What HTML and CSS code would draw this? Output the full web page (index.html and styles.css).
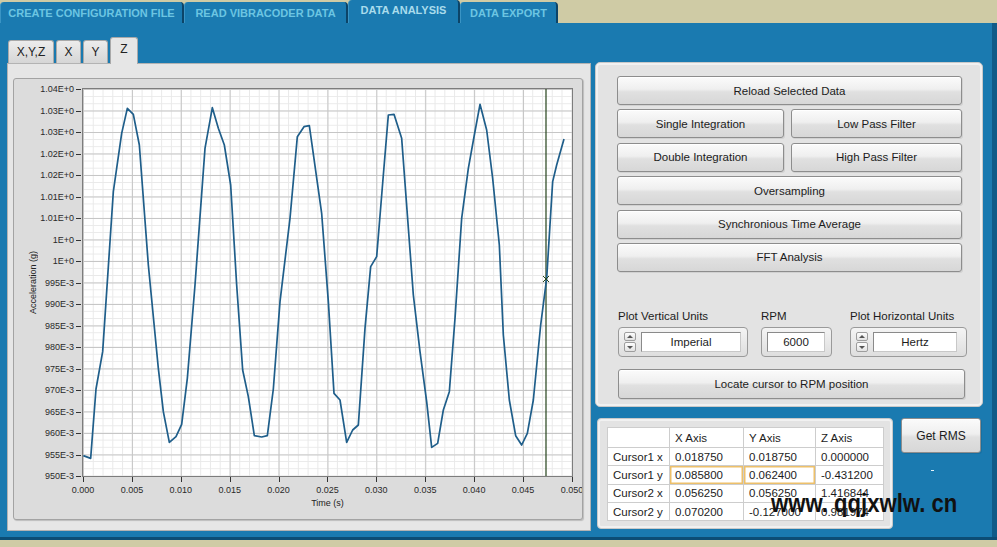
FILE: index.html
```html
<!DOCTYPE html>
<html>
<head>
<meta charset="utf-8">
<title>Data Analysis</title>
<link rel="stylesheet" href="styles.css">
</head>
<body>
<div class="app">
  <div class="topbar">
    <div class="tab t1">CREATE CONFIGURATION FILE</div>
    <div class="tab t2">READ VIBRACODER DATA</div>
    <div class="tab t3 active">DATA ANALYSIS</div>
    <div class="tab t4">DATA EXPORT</div>
  </div>
  <div class="main">
    <div class="leftcol">
      <div class="subtabs">
        <div class="stab s1">X,Y,Z</div>
        <div class="stab s2">X</div>
        <div class="stab s3">Y</div>
        <div class="stab s4 active">Z</div>
      </div>
      <div class="subpanel">
        <div class="chart">
          <div class="chartrow">
            <div class="ytitle"><span>Acceleration (g)</span></div>
            <div class="ylabels">
              <span>1.04E+0</span><span>1.03E+0</span><span>1.03E+0</span><span>1.02E+0</span><span>1.02E+0</span><span>1.01E+0</span><span>1.01E+0</span><span>1E+0</span><span>1E+0</span><span>995E-3</span><span>990E-3</span><span>985E-3</span><span>980E-3</span><span>975E-3</span><span>970E-3</span><span>965E-3</span><span>960E-3</span><span>955E-3</span><span>950E-3</span>
            </div>
            <div class="plot">
              <svg class="curve" viewBox="9 12 1467 1161" preserveAspectRatio="none">
                <line x1="1398" y1="12" x2="1398" y2="1173" stroke="#24421a" stroke-width="1.2" vector-effect="non-scaling-stroke"/>
                <polyline fill="none" stroke="#1f5e8a" stroke-width="1.7" stroke-linejoin="round" vector-effect="non-scaling-stroke" points="10,1112 32,1120 48,912 68,800 100,320 125,145 142,70 160,88 178,180 205,540 235,850 250,980 268,1072 288,1055 305,1018 322,880 345,600 375,190 397,68 415,130 433,180 452,300 470,600 488,855 505,935 523,1052 545,1056 562,1052 580,912 600,650 630,400 652,155 672,125 688,122 725,385 745,650 762,925 780,945 800,1072 818,1035 835,1020 855,730 872,545 890,515 910,270 925,90 942,88 965,160 1000,630 1020,800 1040,950 1055,1087 1073,1075 1090,975 1108,920 1125,700 1145,400 1165,250 1183,150 1200,58 1220,135 1238,280 1258,480 1270,750 1288,945 1307,1052 1325,1080 1342,1045 1360,945 1382,720 1400,580 1418,290 1430,240 1452,162"/>
                <path d="M1389,573 L1407,591 M1407,573 L1389,591" stroke="#24421a" stroke-width="1" vector-effect="non-scaling-stroke"/>
              </svg>
            </div>
          </div>
          <div class="xlabels">
            <span>0.000</span><span>0.005</span><span>0.010</span><span>0.015</span><span>0.020</span><span>0.025</span><span>0.030</span><span>0.035</span><span>0.040</span><span>0.045</span><span>0.050</span>
          </div>
          <div class="xtitle">Time (s)</div>
        </div>
      </div>
    </div>
    <div class="rightcol">
      <div class="ctrlpanel">
        <div class="btngrid">
          <div class="btn wide">Reload Selected Data</div>
          <div class="btn">Single Integration</div>
          <div class="btn">Low Pass Filter</div>
          <div class="btn">Double Integration</div>
          <div class="btn">High Pass Filter</div>
          <div class="btn wide">Oversampling</div>
          <div class="btn wide">Synchronious Time Average</div>
          <div class="btn wide">FFT Analysis</div>
        </div>
        <div class="units">
          <div class="ugroup g1">
            <div class="ulabel">Plot Vertical Units</div>
            <div class="ctrl">
              <div class="spin"><span class="up"></span><span class="down"></span></div>
              <div class="field f1">Imperial</div>
            </div>
          </div>
          <div class="ugroup g2">
            <div class="ulabel">RPM</div>
            <div class="ctrl">
              <div class="field f2">6000</div>
            </div>
          </div>
          <div class="ugroup g3">
            <div class="ulabel">Plot Horizontal Units</div>
            <div class="ctrl">
              <div class="spin"><span class="up"></span><span class="down"></span></div>
              <div class="field f3">Hertz</div>
            </div>
          </div>
        </div>
        <div class="btn locate">Locate cursor to RPM position</div>
      </div>
      <div class="bottomrow">
        <div class="tablepanel">
          <table class="cursors">
            <tr class="hdr"><td class="c0"></td><td class="c1">X Axis</td><td class="c2">Y Axis</td><td class="c3">Z Axis</td></tr>
            <tr><td class="c0">Cursor1 x</td><td>0.018750</td><td>0.018750</td><td>0.000000</td></tr>
            <tr><td class="c0">Cursor1 y</td><td class="sel">0.085800</td><td class="sel">0.062400</td><td>-0.431200</td></tr>
            <tr><td class="c0">Cursor2 x</td><td>0.056250</td><td>0.056250</td><td>1.416844</td></tr>
            <tr><td class="c0">Cursor2 y</td><td>0.070200</td><td>-0.127000</td><td>0.981974</td></tr>
          </table>
        </div>
        <div class="rmscol">
          <div class="btn rms">Get RMS</div>
          <span class="dash"></span>
        </div>
      </div>
    </div>
  </div>
  <div class="footer"></div>
  <div class="watermark">www. qqjxwlw. cn</div>
</div>
</body>
</html>
```

FILE: styles.css
```css
* { box-sizing: border-box; }
html, body { margin: 0; padding: 0; }
body {
  width: 997px;
  height: 547px;
  overflow: hidden;
  font-family: "Liberation Sans", Arial, sans-serif;
  background: #cfcba5;
}
.app {
  position: relative;
  width: 997px;
  height: 547px;
  display: flex;
  flex-direction: column;
}

/* top tabs */
.topbar {
  height: 23px;
  background: #cfcba5;
  display: flex;
  align-items: flex-end;
}
.tab {
  height: 21px;
  background: #1a7ab0;
  color: #6cc5e2;
  font-size: 11px;
  font-weight: bold;
  display: flex;
  align-items: center;
  justify-content: center;
  border-radius: 4px 4px 0 0;
  border-right: 2px solid #0c4468;
  border-left: 1px solid #3a94c4;
  white-space: nowrap;
}
.t1 { width: 184px; }
.t2 { width: 164px; }
.t3 { width: 112px; }
.t4 { width: 98px; }
.tab.active {
  height: 23px;
  color: #a9dcec;
  padding-bottom: 4px;
}

/* main blue area */
.main {
  height: 514px;
  background: #1a7ab0;
  border-right: 5px solid #0f5b88;
  display: flex;
  padding: 14px 0 0 7px;
  gap: 4px;
}
.footer {
  flex: 1;
  border-top: 3px solid #0c4d75;
  background: #cfcba5;
}

/* left column */
.leftcol {
  width: 584px;
  display: flex;
  flex-direction: column;
}
.subtabs {
  height: 26px;
  display: flex;
  align-items: flex-end;
  padding-left: 1px;
}
.stab {
  height: 23px;
  background: linear-gradient(#ececec, #d6d6d6);
  border: 1px solid #a9a9a9;
  border-bottom: none;
  border-radius: 3px 3px 0 0;
  font-size: 12px;
  color: #222;
  display: flex;
  align-items: center;
  justify-content: center;
}
.s1 { width: 46px; }
.s2 { width: 25px; margin-left: 2px; }
.s3 { width: 25px; margin-left: 2px; }
.s4 { width: 28px; margin-left: 2px; }
.stab.active {
  background: #e6e6e6;
  align-items: flex-start;
  padding-top: 4px;
  position: relative;
  z-index: 1;
  margin-bottom: -1px;
  height: 27px;
}
.subpanel {
  height: 468px;
  background: #e6e6e6;
  border: 1px solid #b3b3b3;
  padding: 14px 0 0 5px;
}
.chart {
  width: 570px;
  height: 442px;
  background: #dcdcdc;
  border: 1px solid #a3a3a3;
  border-radius: 3px;
  box-shadow: 1px 1px 1px rgba(0,0,0,0.18);
  padding-top: 10px;
  overflow: hidden;
}
.chartrow {
  display: flex;
  align-items: center;
  height: 387px;
}
.ytitle {
  width: 30px;
  margin-left: 4px;
  display: flex;
  justify-content: center;
  align-items: center;
}
.ytitle span {
  writing-mode: vertical-rl;
  transform: rotate(180deg);
  font-size: 9px;
  color: #222;
  white-space: nowrap;
}
.ylabels {
  width: 35px;
  height: 397px;
  display: flex;
  flex-direction: column;
  justify-content: space-between;
  align-items: flex-end;
}
.ylabels span {
  position: relative;
  display: block;
  font-size: 9px;
  line-height: 10px;
  height: 10px;
  color: #2a2a2a;
  padding-right: 9px;
  white-space: nowrap;
}
.ylabels span::after {
  content: "";
  position: absolute;
  right: 2px;
  top: 5px;
  width: 5px;
  height: 1px;
  background: #333;
}
.plot {
  position: relative;
  width: 489px;
  height: 387px;
  background-color: #fff;
  background-image:
    linear-gradient(to right, #c6c6c6 1px, transparent 1px),
    linear-gradient(to bottom, #c6c6c6 1px, transparent 1px),
    linear-gradient(to right, #e9e9e9 1px, transparent 1px),
    linear-gradient(to bottom, #e9e9e9 1px, transparent 1px);
  background-size: 48.9px 100%, 100% 21.5px, 9.78px 100%, 100% 7.1667px;
  box-shadow: 0 0 0 1px #7d7d7d;
}
.curve {
  position: absolute;
  left: 0;
  top: 0;
  width: 100%;
  height: 100%;
}
.xlabels {
  margin-left: 54px;
  width: 519px;
  height: 22px;
  display: flex;
  justify-content: space-between;
}
.xlabels span {
  position: relative;
  display: block;
  width: 30px;
  text-align: center;
  font-size: 9px;
  color: #2a2a2a;
  padding-top: 9px;
  line-height: 10px;
}
.xlabels span::before {
  content: "";
  position: absolute;
  left: 15px;
  top: 1px;
  width: 1px;
  height: 5px;
  background: #333;
}
.xtitle {
  margin-left: 69px;
  width: 489px;
  text-align: center;
  font-size: 9px;
  color: #222;
  line-height: 10px;
}

/* right column */
.rightcol {
  width: 388px;
  margin-top: 25px;
  display: flex;
  flex-direction: column;
}
.ctrlpanel {
  height: 345px;
  background: #e3e3e3;
  border: 1px solid #c9c9c9;
  border-radius: 5px;
  box-shadow: inset 0 0 0 2px #f1f1f1;
  padding: 13px 0 0 21px;
}
.btngrid {
  width: 345px;
  display: grid;
  grid-template-columns: 167px 171px;
  column-gap: 7px;
  row-gap: 4.4px;
  grid-auto-rows: 29px;
}
.btn {
  display: flex;
  align-items: center;
  justify-content: center;
  background: linear-gradient(#fbfbfb, #efefef 45%, #e0e0e0 55%, #d7d7d7);
  border: 1px solid #8d8d8d;
  border-radius: 3px;
  box-shadow: inset 0 1px 0 #ffffff, 1px 1px 0 rgba(0,0,0,0.08);
  font-size: 11.5px;
  color: #1c1c1c;
  white-space: nowrap;
}
.btn.wide { grid-column: 1 / 3; }
.units {
  display: flex;
  margin-top: 37px;
}
.ugroup { display: flex; flex-direction: column; }
.g1 { width: 130px; margin-left: 1px; }
.g2 { width: 71px; margin-left: 13px; }
.g3 { width: 117px; margin-left: 18px; }
.ulabel {
  font-size: 11.5px;
  line-height: 14px;
  height: 14px;
  color: #1c1c1c;
  margin-bottom: 4px;
  white-space: nowrap;
}
.ctrl {
  height: 30px;
  border: 1px solid #9a9a9a;
  border-radius: 4px;
  background: linear-gradient(#f4f4f4, #dedede);
  display: flex;
  align-items: center;
  padding: 0 5px;
  gap: 5px;
}
.spin {
  width: 12px;
  height: 20px;
  display: flex;
  flex-direction: column;
  gap: 1px;
}
.spin span {
  flex: 1;
  border: 1px solid #9d9d9d;
  border-radius: 2px;
  background: linear-gradient(#fdfdfd, #e2e2e2);
  position: relative;
}
.spin span::after {
  content: "";
  position: absolute;
  left: 2px;
  width: 0;
  height: 0;
  border-left: 3px solid transparent;
  border-right: 3px solid transparent;
}
.spin .up::after { top: 2px; border-bottom: 3px solid #555; }
.spin .down::after { top: 3px; border-top: 3px solid #555; }
.field {
  height: 20px;
  background: #fff;
  border: 1px solid #8a8a8a;
  border-right-color: #c8c8c8;
  border-bottom-color: #c8c8c8;
  font-size: 11.5px;
  color: #1c1c1c;
  display: flex;
  align-items: center;
  justify-content: center;
}
.f1 { width: 100px; }
.f2 { width: 58px; }
.f3 { width: 84px; }
.locate {
  width: 347px;
  height: 30px;
  margin-top: 12px;
  margin-left: 1px;
}

.bottomrow {
  display: flex;
  margin-top: 11px;
}
.tablepanel {
  width: 296px;
  height: 111px;
  margin-left: 2px;
  background: #e3e3e3;
  border: 1px solid #c9c9c9;
  border-radius: 4px;
  box-shadow: inset 0 0 0 2px #f1f1f1;
  padding: 8px 0 0 9px;
}
.cursors {
  border-collapse: collapse;
  background: #fff;
  font-size: 11.5px;
  color: #1c1c1c;
  border-top: 1px solid #7c7c7c;
  border-left: 1px solid #7c7c7c;
}
.cursors td {
  height: 18.3px;
  padding: 0 0 0 5px;
  border: 1px solid #cdcdcd;
  white-space: nowrap;
  line-height: 16px;
}
.cursors tr.hdr td { height: 20px; }
.cursors td.c0 { width: 62px; padding-left: 5px; }
.cursors td.c1 { width: 74px; }
.cursors td.c2 { width: 72px; }
.cursors td.c3 { width: 68px; }
.cursors td.sel { box-shadow: inset 0 0 0 1.5px #edc06a; }
.rmscol {
  margin-left: 8px;
  display: flex;
  flex-direction: column;
  align-items: center;
}
.rms {
  width: 80px;
  height: 35px;
  font-size: 12px;
}
.dash {
  width: 3px;
  height: 1px;
  background: #e8f4fa;
  margin-top: 17px;
  margin-left: -18px;
}
.watermark {
  position: absolute;
  left: 771px;
  top: 490px;
  font-family: "Liberation Sans", Arial, sans-serif;
  font-weight: bold;
  font-size: 26px;
  line-height: 26px;
  color: #111;
  white-space: pre;
  transform: scaleX(0.85);
  transform-origin: left top;
}
```
